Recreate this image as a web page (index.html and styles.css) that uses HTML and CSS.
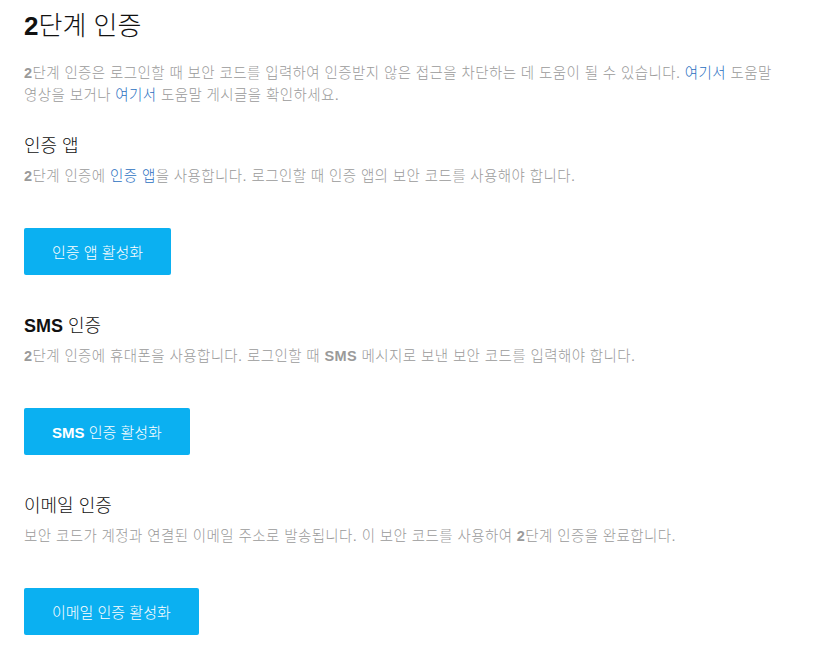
FILE: index.html
```html
<!DOCTYPE html>
<html lang="ko">
<head>
    <meta charset="UTF-8">
    <meta name="viewport" content="width=device-width, initial-scale=1.0">
    <title>2단계 인증</title>
    <link rel="stylesheet" href="styles.css">
</head>
<body>
    <div class="page">
        <h1 class="title"><b>2</b>단계 인증</h1>
        <p class="intro"><b>2</b>단계 인증은 로그인할 때 보안 코드를 입력하여 인증받지 않은 접근을 차단하는 데 도움이 될 수 있습니다. <a href="#">여기서</a> 도움말 영상을 보거나 <a href="#">여기서</a> 도움말 게시글을 확인하세요.</p>

        <div class="section">
            <h2>인증 앱</h2>
            <p class="desc"><b>2</b>단계 인증에 <a href="#">인증 앱</a>을 사용합니다. 로그인할 때 인증 앱의 보안 코드를 사용해야 합니다.</p>
            <button class="btn">인증 앱 활성화</button>
        </div>

        <div class="section">
            <h2><b>SMS</b> 인증</h2>
            <p class="desc"><b>2</b>단계 인증에 휴대폰을 사용합니다. 로그인할 때 <b>SMS</b> 메시지로 보낸 보안 코드를 입력해야 합니다.</p>
            <button class="btn"><b>SMS</b> 인증 활성화</button>
        </div>

        <div class="section">
            <h2>이메일 인증</h2>
            <p class="desc">보안 코드가 계정과 연결된 이메일 주소로 발송됩니다. 이 보안 코드를 사용하여 <b>2</b>단계 인증을 완료합니다.</p>
            <button class="btn">이메일 인증 활성화</button>
        </div>
    </div>
</body>
</html>
```

FILE: styles.css
```css
*{
    margin: 0;
    padding: 0;
    box-sizing: border-box;
}

body{
    background: #fff;
    font-family: "Liberation Sans", "Noto Sans CJK KR", sans-serif;
    font-weight: 300;
    color: #111;
}

.page{
    width: 780px;
    padding: 11px 0 0 24px;
}

.title{
    font-size: 26px;
    line-height: 30px;
    font-weight: 300;
    color: #111;
}

b{
    font-weight: bold;
}

.intro,
.desc{
    font-size: 14.5px;
    line-height: 21px;
    letter-spacing: 0.4px;
    color: #9a9a9a;
}

.intro{
    margin-top: 21px;
    line-height: 22px;
}

a{
    color: #2a6fbf;
    text-decoration: none;
}

.section{
    margin-top: 27px;
}
.section + .section{
    margin-top: 38px;
}

.section h2{
    font-size: 18px;
    line-height: 26px;
    font-weight: 300;
    color: #111;
}

.desc{
    margin-top: 7px;
}

.btn{
    display: block;
    margin-top: 41px;
    height: 47px;
    padding: 0 28px;
    border: none;
    border-radius: 2px;
    background: #0bb0f1;
    color: #fff;
    font-family: inherit;
    font-weight: 300;
    font-size: 15px;
    cursor: pointer;
}
```
